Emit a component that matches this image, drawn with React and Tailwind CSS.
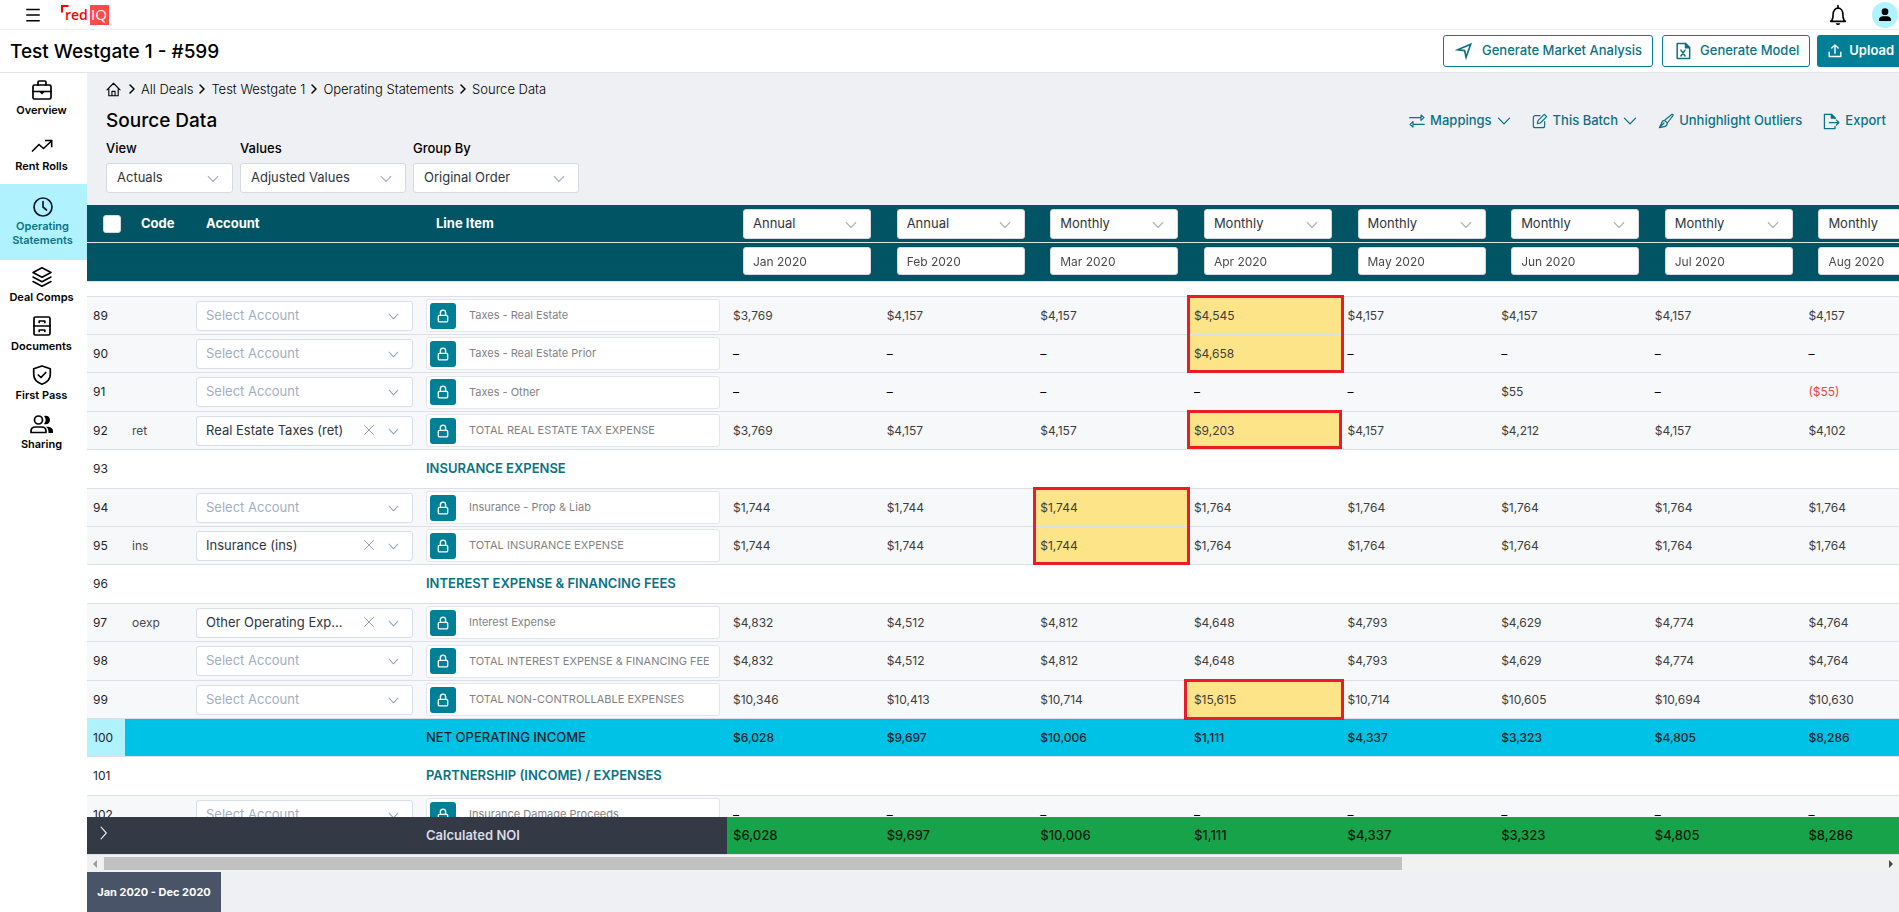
import React from 'react';

const months = ['Jan 2020', 'Feb 2020', 'Mar 2020', 'Apr 2020', 'May 2020', 'Jun 2020', 'Jul 2020', 'Aug 2020'];
const periods = ['Annual', 'Annual', 'Monthly', 'Monthly', 'Monthly', 'Monthly', 'Monthly', 'Monthly'];
const dashes = ['-', '-', '-', '-', '-', '-', '-', '-'];
const noi = ['$6,028', '$9,697', '$10,006', '$1,111', '$4,337', '$3,323', '$4,805', '$8,286'];

const rows = [
  { n: 89, item: 'Taxes - Real Estate', v: ['$3,769', '$4,157', '$4,157', '$4,545', '$4,157', '$4,157', '$4,157', '$4,157'], hot: 3, frame: 'double' },
  { n: 90, item: 'Taxes - Real Estate Prior', v: ['-', '-', '-', '$4,658', '-', '-', '-', '-'], hot: 3 },
  { n: 91, item: 'Taxes - Other', v: ['-', '-', '-', '-', '-', '$55', '-', '($55)'] },
  { n: 92, code: 'ret', account: 'Real Estate Taxes (ret)', item: 'TOTAL REAL ESTATE TAX EXPENSE', v: ['$3,769', '$4,157', '$4,157', '$9,203', '$4,157', '$4,212', '$4,157', '$4,102'], hot: 3, frame: 'single' },
  { n: 93, section: 'INSURANCE EXPENSE' },
  { n: 94, item: 'Insurance - Prop & Liab', v: ['$1,744', '$1,744', '$1,744', '$1,764', '$1,764', '$1,764', '$1,764', '$1,764'], hot: 2, frame: 'double' },
  { n: 95, code: 'ins', account: 'Insurance (ins)', item: 'TOTAL INSURANCE EXPENSE', v: ['$1,744', '$1,744', '$1,744', '$1,764', '$1,764', '$1,764', '$1,764', '$1,764'], hot: 2 },
  { n: 96, section: 'INTEREST EXPENSE & FINANCING FEES' },
  { n: 97, code: 'oexp', account: 'Other Operating Exp...', item: 'Interest Expense', v: ['$4,832', '$4,512', '$4,812', '$4,648', '$4,793', '$4,629', '$4,774', '$4,764'] },
  { n: 98, item: 'TOTAL INTEREST EXPENSE & FINANCING FEES', v: ['$4,832', '$4,512', '$4,812', '$4,648', '$4,793', '$4,629', '$4,774', '$4,764'] },
  { n: 99, item: 'TOTAL NON-CONTROLLABLE EXPENSES', v: ['$10,346', '$10,413', '$10,714', '$15,615', '$10,714', '$10,605', '$10,694', '$10,630'], hot: 3, frame: 'wide' },
  { n: 100, total: 'NET OPERATING INCOME', v: noi },
  { n: 101, section: 'PARTNERSHIP (INCOME) / EXPENSES' },
  { n: 102, item: 'Insurance Damage Proceeds', v: dashes },
];

const frames = {
  double: '-top-0.5 -left-px -right-0.5 h-[78px]',
  single: '-top-0.5 -left-px right-0 h-[39px]',
  wide: '-top-0.5 -left-1 -right-0.5 h-[41px]',
};

function Icon({ children, className = 'size-5', width = 2 }) {
  return (
    <svg viewBox="0 0 24 24" className={'shrink-0 ' + className} fill="none" stroke="currentColor" strokeWidth={width} strokeLinecap="round" strokeLinejoin="round" aria-hidden="true">
      {children}
    </svg>
  );
}

const Chevron = ({ className }) => (
  <Icon className={className} width={2.2}>
    <path d="M2.500 7l9.500 10 9.500-10" />
  </Icon>
);

const icons = {
  briefcase: (
    <Icon className="size-6" width={1.7}>
      <rect x="3" y="7" width="18" height="14" rx="1.6" />
      <path d="M8 7V4.2C8 3.5 8.5 3 9.2 3h5.6c.7 0 1.200.5 1.200 1.200V7M3 13.500h18" />
      <path d="M9 13.500h6L12 16.500z" fill="currentColor" stroke="none" />
    </Icon>
  ),
  trend: (
    <Icon className="size-6" width={1.6}>
      <path d="M2 17.500l7-7 4.500 4L21.500 7M15 6.500h6.700v6.700" strokeLinecap="butt" strokeLinejoin="miter" />
    </Icon>
  ),
  clock: (
    <Icon className="size-6" width={1.7}>
      <circle cx="12" cy="12" r="9" />
      <path d="M12 6.500V12l3.500 3" />
    </Icon>
  ),
  layers: (
    <Icon className="size-6" width={1.6}>
      <path d="M12 2.800l9 4.700-9 4.700-9-4.700zM3 12l9 4.700L21 12M3 16.500l9 4.700 9-4.700" />
    </Icon>
  ),
  cabinet: (
    <Icon className="size-6" width={1.7}>
      <rect x="4" y="3" width="16" height="18" rx="1.600" />
      <path d="M4 12h16M9.200 8.500V7h5.600v1.500M9.200 17.500V16h5.600v1.500" />
    </Icon>
  ),
  shield: (
    <Icon className="size-6" width={1.7}>
      <path d="M12 3l8.300 2.800v5.400c0 4.800-3.300 8.200-8.300 10-5-1.800-8.300-5.200-8.300-10V5.800z" />
      <path d="M8.300 12l2.700 2.500 4.800-5" />
    </Icon>
  ),
  people: (
    <Icon className="size-6" width={1.7}>
      <circle cx="8.500" cy="8" r="4" />
      <path d="M1 20.500v-1.300C1 16.600 3 15 5.500 15h6c2.500 0 4.500 1.600 4.500 4.200v1.300z" />
      <path d="M14 4c4-1 6 1.300 6 4s-2 5-6 4c2.200-2.400 2.200-5.600 0-8zM16 14.800c4-.5 7 1.200 7 4.200v2h-4.500c0-3-.3-4.700-2.500-6.200z" fill="currentColor" stroke="none" />
    </Icon>
  ),
};

function NavItem({ icon, label, size }) {
  return (
    <a href="#" className={'flex flex-col items-center pt-[5px] text-[11px] leading-4 font-semibold text-black ' + size}>
      {icons[icon]}
      <span>{label}</span>
    </a>
  );
}

function Sidebar() {
  return (
    <nav className="w-[87px] shrink-0 bg-white pr-1">
      <NavItem icon="briefcase" label="Overview" size="h-14" />
      <NavItem icon="trend" label="Rent Rolls" size="h-[55px]" />
      <a href="#" className="-mr-1 flex h-[76px] flex-col items-center bg-[#b0f3ff] pt-[11px] pr-0.5 text-center text-[11px] leading-[14px] font-semibold text-[#0b7285]">
        <span className="text-gray-900">{icons.clock}</span>
        <span>Operating<br />Statements</span>
      </a>
      <NavItem icon="layers" label="Deal Comps" size="h-[49px]" />
      <NavItem icon="cabinet" label="Documents" size="h-[49px]" />
      <NavItem icon="shield" label="First Pass" size="h-[49px]" />
      <NavItem icon="people" label="Sharing" size="h-[49px]" />
    </nav>
  );
}

function Filter({ id, label, value, width }) {
  return (
    <div className={width}>
      <label htmlFor={id} className="block text-[13px] leading-4 font-medium text-black">{label}</label>
      <div className="relative mt-[7px]">
        <select id={id} className="h-[30px] w-full appearance-none rounded-[3px] border border-[#d5d9e2] bg-white px-2.5 text-[13px] text-[#30343b]">
          <option>{value}</option>
        </select>
        <Chevron className="pointer-events-none absolute top-2.5 right-3.5 size-3 text-[#a9b3c6]" />
      </div>
    </div>
  );
}

function Crumb({ children }) {
  return (
    <>
      <Icon className="size-3 text-black" width={3}><path d="M8 4l8 8-8 8" /></Icon>
      <a href="#">{children}</a>
    </>
  );
}

function ToolButton({ icon, label, menu }) {
  return (
    <button type="button" className="flex items-center gap-[5px] text-[13px] font-medium text-[#0b7285]">
      {icon}
      <span>{label}</span>
      {menu && <Chevron className="size-3.5" />}
    </button>
  );
}

function AccountSelect({ row }) {
  return (
    <div className="relative w-[217px]">
      <select
        aria-label={'Account for row ' + row.n}
        className={'block h-[30px] w-full appearance-none rounded-[3px] border border-[#d9dde6] bg-white pl-[9px] pr-14 text-[13px] ' + (row.account ? 'text-[#30343b]' : 'text-[#a3adc2]')}
      >
        <option>{row.account || 'Select Account'}</option>
      </select>
      {row.account && (
        <button type="button" aria-label="Clear account" className="absolute top-2 right-[38px] text-[#94a0b8]">
          <Icon className="size-3" width={2}><path d="M3 3l18 18M21 3L3 21" /></Icon>
        </button>
      )}
      <Chevron className="pointer-events-none absolute top-2.5 right-3.5 size-[11px] text-[#94a0b8]" />
    </div>
  );
}

function LineItem({ row }) {
  return (
    <div className="flex h-[33px] w-[294px] rounded-[3px] border border-[#e3e6ec] bg-white">
      <div className="flex w-8 shrink-0 items-center pl-[3px]">
        <button type="button" aria-label="Locked line item" className="flex h-[26px] w-[26px] items-center justify-center rounded-[3px] bg-[#007f96] text-white">
          <Icon className="size-3.5" width={2.4}>
            <rect x="4" y="11" width="16" height="11" rx="2" />
            <path d="M7.500 11V6.500a4.500 4.500 0 0 1 9 0V11" />
          </Icon>
        </button>
      </div>
      <input readOnly aria-label={'Line item ' + row.n} value={row.item} className="min-w-0 flex-1 bg-transparent px-2.5 text-[11px] text-[#828282]" />
    </div>
  );
}

function Row({ row }) {
  const edge = 'border-b border-[#dcdfe6] ';
  const height = row.n % 5 === 1 || row.n % 5 === 3 ? 'h-[39px] ' : 'h-[38px] ';
  const bg = row.section ? 'bg-white ' : row.total ? 'bg-[#00c2e6] ' : 'bg-[#f7f8fa] ';
  const cell = edge + height + bg + 'p-0 ';
  return (
    <tr>
      <th scope="row" className={edge + height + 'pl-1.5 text-left text-xs font-normal text-[#1f2328] ' + (row.total ? 'bg-[#b0f3ff]' : bg)}>{row.n}</th>
      <td className={cell + 'pl-[7px] text-xs text-[#4a4a4a]'}>{row.code}</td>
      <td className={cell + 'pl-1.5'}>{row.item && <AccountSelect row={row} />}</td>
      <td className={cell + 'pl-[7px] text-[13px]'}>
        {row.item && <LineItem row={row} />}
        {row.section && <span className="font-semibold text-[#0b7285]">{row.section}</span>}
        {row.total && <span className="font-medium text-[#10242b]">{row.total}</span>}
      </td>
      {months.map((m, i) => {
        const v = row.v ? row.v[i] : '';
        const hot = row.hot === i;
        const color = v.startsWith('(') ? 'text-[#ef4444] ' : v === '-' ? 'text-black ' : row.total ? 'font-medium text-[#10242b] ' : 'text-[#3d3d3d] ';
        return (
          <td key={m} className={edge + height + 'relative p-0 pl-1.5 text-xs ' + color + (hot ? 'bg-[#fde488]' : bg)}>
            {v === '-' ? '–' : v}
            {hot && row.frame && <span className={'pointer-events-none absolute z-10 border-3 border-[#ed1c24] ' + frames[row.frame]} />}
          </td>
        );
      })}
    </tr>
  );
}

function DataTable() {
  const head = 'h-[38px] border-b border-[#dfe5e8] bg-[#005464] p-0 text-left text-[13px] font-bold text-white ';
  return (
    <div className="min-h-0 flex-1 overflow-hidden bg-white">
      <table className="w-full min-w-[1869px] table-fixed border-separate border-spacing-0">
        <colgroup>
          <col className="w-[38px]" />
          <col className="w-[65px]" />
          <col className="w-[229px]" />
          <col className="w-[308px]" />
          {months.map((m) => <col key={m} />)}
        </colgroup>
        <thead className="sticky top-0 z-20">
          <tr>
            <th className={head + 'pl-4'}>
              <input type="checkbox" aria-label="Select all rows" className="block h-[18px] w-[18px] appearance-none rounded-[3px] border border-[#d5d9e2] bg-white" />
            </th>
            <th className={head + 'pl-4'}>Code</th>
            <th className={head + 'pl-4'}>Account</th>
            <th className={head + 'pl-[17px]'}>Line Item</th>
            {months.map((m, i) => (
              <th key={m} className={head + 'pl-4'}>
                <div className="relative w-32">
                  <select aria-label={'Period for ' + m} className="block h-[30px] w-full appearance-none rounded-[3px] border border-[#d5d9e2] bg-white px-[9px] text-[13px] font-normal text-[#30343b]">
                    <option>{periods[i]}</option>
                  </select>
                  <Chevron className="pointer-events-none absolute top-2.5 right-3.5 size-3 text-[#a9b3c6]" />
                </div>
              </th>
            ))}
          </tr>
          <tr>
            <td colSpan={4} className={head + 'h-[39px]'} />
            {months.map((m) => (
              <td key={m} className={head + 'h-[39px] pb-0.5 pl-4'}>
                <input aria-label={'Month ' + m} defaultValue={m} className="block h-7 w-32 rounded-[3px] border border-[#d5d9e2] bg-white px-[9px] text-xs font-normal text-[#4a4a4a]" />
              </td>
            ))}
          </tr>
        </thead>
        <tbody>
          <tr>
            <td colSpan={12} className="h-[15px] border-b border-[#dcdfe6] p-0" />
          </tr>
          {rows.map((row) => <Row key={row.n} row={row} />)}
        </tbody>
        <tfoot className="sticky bottom-0 z-20">
          <tr>
            <td colSpan={3} className="h-[38px] border-b border-[#dcdfe6] bg-[#333945] p-0 pl-2.5">
              <button type="button" aria-label="Expand summary" className="block pb-1.5 text-[#dfe3ea]">
                <Icon className="size-3.5" width={2}><path d="M7 2l9 10-9 10" /></Icon>
              </button>
            </td>
            <td className="h-[38px] border-b border-[#dcdfe6] bg-[#333945] p-0 pl-[7px] text-[13px] font-semibold text-[#d8dce6]">Calculated NOI</td>
            {noi.map((v, i) => (
              <td key={i} className="h-[38px] border-b border-[#dcdfe6] bg-[#17a34a] p-0 pl-1.5 text-[13px] font-medium text-[#0b1a10]">{v}</td>
            ))}
          </tr>
        </tfoot>
      </table>
    </div>
  );
}

export default function App() {
  return (
    <div className="flex h-screen flex-col overflow-hidden bg-white font-['Inter',sans-serif] text-black">
      <header className="flex h-[30px] shrink-0 items-center border-b border-[#ececef] pl-6">
        <button type="button" aria-label="Menu" className="text-black">
          <Icon className="size-[18px]" width={2}><path d="M3 4.500h18M3 12h18M3 19.500h18" strokeLinecap="butt" /></Icon>
        </button>
        <a href="#" aria-label="redIQ" className="ml-[18px] flex items-center">
          <svg viewBox="0 0 50 22" className="h-[22px] w-[50px]" aria-hidden="true">
            <path d="M2 8.500V2h6.500" fill="none" stroke="#f00" strokeWidth="2" />
            <text x="5" y="16" fill="#f00" fontFamily="Open Sans, sans-serif" fontSize="14" fontWeight="600">red</text>
            <rect x="30" y="1" width="19" height="20" fill="#ff4848" />
            <text x="31" y="16" fill="#fff" fontFamily="Open Sans, sans-serif" fontSize="15">IQ</text>
          </svg>
        </a>
        <button type="button" aria-label="Notifications" className="ml-auto text-black">
          <Icon className="size-[22px]" width={1.800}>
            <path d="M5.500 17.500c1-1.500 1.200-3.500 1.200-6.500 0-3.500 2-6.500 5.300-6.500s5.300 3 5.300 6.500c0 3 .2 5 1.200 6.500l1.500 1.500H4z" />
            <path d="M12 1.800v2" />
            <path d="M9.500 21h5c-.5 1.500-1.500 2-2.500 2s-2-.5-2.500-2z" fill="currentColor" stroke="none" />
          </Icon>
        </button>
        <button type="button" aria-label="Account" className="ml-[23px] mr-px flex size-[26px] items-center justify-center rounded-full bg-[#b0f3ff] text-black">
          <svg viewBox="0 0 24 24" className="size-4" fill="currentColor" aria-hidden="true">
            <circle cx="12" cy="7" r="5" />
            <path d="M3 21v-2c0-3 2.500-5 6-5h6c3.500 0 6 2 6 5v2z" />
          </svg>
        </button>
      </header>

      <div className="z-10 flex h-[43px] shrink-0 items-center gap-[9px] border-b border-[#e2e4e9] pl-2.5">
        <h1 className="mr-auto pt-0.5 text-[19px] leading-6 font-medium">Test Westgate 1 - #599</h1>
        <button type="button" className="flex h-8 items-center gap-2 rounded-[3px] border border-[#007f96] px-2.5 text-[13px] font-medium whitespace-nowrap text-[#0b7285]">
          <Icon className="size-5" width={2}><path d="M4.500 10.500L20 4l-5.500 15.500-1.800-8z" strokeLinejoin="miter" /></Icon>
          Generate Market Analysis
        </button>
        <button type="button" className="flex h-8 items-center gap-[7px] rounded-[3px] border border-[#007f96] px-2.5 text-[13px] font-medium whitespace-nowrap text-[#0b7285]">
          <Icon className="size-5" width={1.800}>
            <path d="M5 3h10l5 5v13H5zM9.500 11l5 7M14.500 11l-5 7" />
            <path d="M15 3l5 5h-5z" fill="currentColor" />
          </Icon>
          Generate Model
        </button>
        <button type="button" className="-ml-0.5 flex h-8 items-center gap-[7px] rounded-l-[3px] bg-[#007f96] pr-[5px] pl-[11px] text-[13px] font-semibold text-white">
          <Icon className="size-3.5" width={2.400}><path d="M12 16V2M6.500 7L12 1.500 17.500 7M2 14v7.500h20V14" /></Icon>
          Upload
        </button>
      </div>

      <div className="flex min-h-0 flex-1">
        <Sidebar />
        <main className="flex min-w-0 flex-1 flex-col bg-[#eff0f4]">
          <nav aria-label="Breadcrumb" className="flex items-center gap-[3px] pt-[7px] pl-[19px] text-[13px] leading-[18px] font-light text-black">
            <a href="#" aria-label="Home" className="mr-0.5">
              <Icon className="size-[15px]" width={1.800}>
                <path d="M1.500 12.500L12 2l10.500 10.500M4.500 10v12h15V10M9.500 22v-7h5v7" />
              </Icon>
            </a>
            <Crumb>All Deals</Crumb>
            <Crumb>Test Westgate 1</Crumb>
            <Crumb>Operating Statements</Crumb>
            <Crumb>Source Data</Crumb>
          </nav>
          <div className="mt-[11px] flex items-center gap-[21px] pr-[13px] pl-[19px]">
            <h2 className="mr-auto text-[19px] leading-6 font-medium">Source Data</h2>
            <ToolButton label="Mappings" menu icon={<Icon className="size-4" width={1.800}><path d="M1 7h17M18 3l4.500 4L18 11zM23 17H6M6 13l-4.500 4L6 21z" /></Icon>} />
            <ToolButton label="This Batch" menu icon={<Icon className="size-4" width={1.800}><path d="M12 4H5a3 3 0 0 0-3 3v12a3 3 0 0 0 3 3h11a3 3 0 0 0 3-3v-6M8 16l1-4.500L18.500 2 22 5.500 12.500 15z" /></Icon>} />
            <ToolButton label="Unhighlight Outliers" icon={<Icon className="size-4" width={1.800}><path d="M10 11L21 2c1.500-.5 2 .5 1.500 2L14 15zM10 11c-2.500 0-4 1.500-4.500 4L2 22l7.500-1.500c2.500-.5 4.500-3 4.500-5.500zM2 22l7-7" /></Icon>} />
            <ToolButton label="Export" icon={<Icon className="size-[17px]" width={1.800}><path d="M17 8V7l-5-5H2v20h15v-3M12 2v5h5M9 13.500h13.500M19 10l3.500 3.500L19 17" /><path d="M12 2l5 5h-5z" fill="currentColor" /></Icon>} />
          </div>
          <div className="flex gap-[7px] pt-[7px] pb-3 pl-[19px]">
            <Filter id="view" label="View" value="Actuals" width="w-[127px]" />
            <Filter id="values" label="Values" value="Adjusted Values" width="w-[166px]" />
            <Filter id="group" label="Group By" value="Original Order" width="w-[166px]" />
          </div>
          <DataTable />
          <div className="flex h-[17px] shrink-0 items-center bg-[#f1f1f1]">
            <svg viewBox="0 0 17 14" className="h-3.5 w-[17px]" aria-hidden="true"><path d="M10 3v8L6 7z" fill="#9a9a9a" /></svg>
            <div className="flex-1">
              <div className="h-[13px] w-[73%] bg-[#c1c1c1]" />
            </div>
            <svg viewBox="0 0 17 14" className="h-3.5 w-[17px]" aria-hidden="true"><path d="M7 3v8l4-4z" fill="#4a4a4a" /></svg>
          </div>
          <button type="button" className="flex h-10 w-[134px] shrink-0 items-center justify-center bg-[#4a5468] text-[11px] font-bold whitespace-nowrap text-white">
            Jan 2020 - Dec 2020
          </button>
        </main>
      </div>
    </div>
  );
}
